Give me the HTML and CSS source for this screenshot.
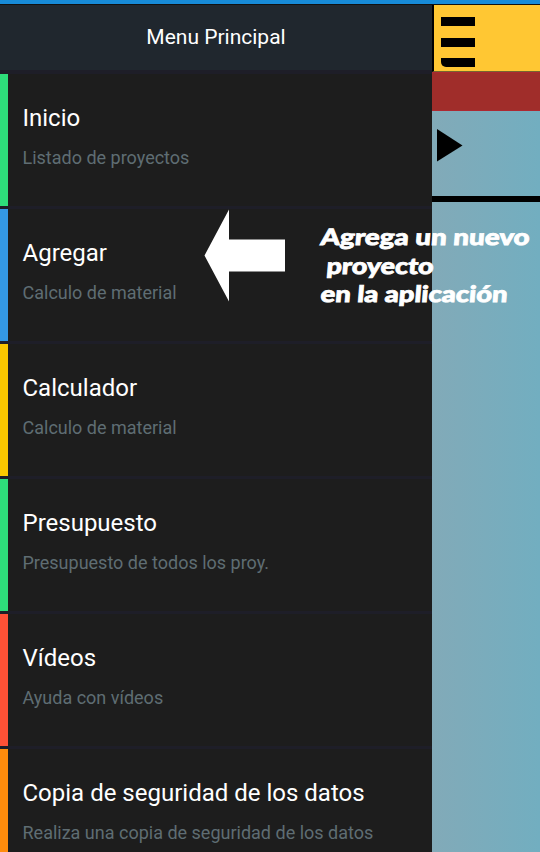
FILE: index.html
```html
<!DOCTYPE html>
<html lang="es">
<head>
<meta charset="utf-8">
<title>Menu Principal</title>
<link rel="stylesheet" href="styles.css">
</head>
<body>
<div class="status"></div>
<div class="screen">
  <nav class="drawer">
    <header class="drawer-head">Menu Principal</header>
    <ul class="menu">
      <li class="item green"><h2>Inicio</h2><p>Listado de proyectos</p></li>
      <li class="item blue"><h2>Agregar</h2><p>Calculo de material</p></li>
      <li class="item yellow"><h2>Calculador</h2><p>Calculo de material</p></li>
      <li class="item green"><h2>Presupuesto</h2><p>Presupuesto de todos los proy.</p></li>
      <li class="item red"><h2>Vídeos</h2><p>Ayuda con vídeos</p></li>
      <li class="item orange"><h2>Copia de seguridad de los datos</h2><p>Realiza una copia de seguridad de los datos</p></li>
    </ul>
  </nav>
  <main class="page">
    <div class="toolbar"><span></span><span></span><span></span></div>
    <div class="band"></div>
    <div class="row"><svg width="28" height="36" viewBox="0 0 28 36"><path d="M1 1V33.500L26.500 17.500Z"/></svg></div>
    <div class="body"></div>
  </main>
</div>
<div class="hint">
  <svg width="82" height="94" viewBox="0 0 82 94"><path d="M0.500 46.500L25 0.500V30.500H81V62.500H25V92.500Z" fill="#fff"/></svg>
  <svg class="hint-text" width="222" height="94" viewBox="0 0 222 94">
    <text transform="translate(1 36) skewX(-5)" textLength="209" lengthAdjust="spacingAndGlyphs">Agrega un nuevo</text>
    <text transform="translate(7 64.500) skewX(-5)" textLength="107" lengthAdjust="spacingAndGlyphs">proyecto</text>
    <text transform="translate(1 93) skewX(-5)" textLength="187" lengthAdjust="spacingAndGlyphs">en la aplicación</text>
  </svg>
</div>
</body>
</html>
```
FILE: styles.css
```css
* { box-sizing: border-box; margin: 0; padding: 0; }
body { width: 540px; height: 852px; overflow: hidden; background: #1d1d1d; font-family: Roboto, sans-serif; }
.status { height: 5px; background: #178bd8; border-bottom: 1px solid #111; }
.screen { display: flex; height: 847px; overflow: hidden; }
.drawer { width: 432px; background: #1d1d1d; }
.drawer-head { height: 67px; background: #20272e; color: #fff; text-align: center; font-size: 21px; line-height: 64px; }
.menu { list-style: none; }
.item { height: 135px; border-top: 3px solid #1e1e28; display: flex; flex-direction: column; padding-left: 22.5px; position: relative; }
.item:first-child { height: 136px; border-top-width: 4px; }
.item:first-child { margin-top: -2px; }
.item::before { content: ""; position: absolute; left: 0; top: 0; width: 8px; height: 132px; background: var(--bar); }
.green { --bar: #2edd7a; }
.blue { --bar: #3498e4; }
.yellow { --bar: #fac800; }
.red { --bar: #ff5136; }
.orange { --bar: #ff8c0c; }
.item h2 { font-weight: 400; font-size: 24px; line-height: 28px; color: #fff; margin-top: 30px; white-space: nowrap; }
.item p { font-size: 18px; line-height: 22px; color: #5f6d73; margin-top: 15px; white-space: nowrap; }
.page { width: 108px; display: flex; flex-direction: column; background: linear-gradient(90deg, #82aab8, #72aec0); }
.toolbar { height: 67px; background: #ffc733; border-left: 2px solid #000; border-bottom: 1px solid #77652f; padding: 12px 0 0 7px; display: flex; flex-direction: column; gap: 11.5px; }
.toolbar span { width: 34px; height: 9px; background: #000; }
.toolbar span:last-child { border-bottom-left-radius: 5px; }
.band { height: 39px; background: #a02d2a; border-top: 1px solid #ad2831; border-bottom: 1px solid #ad2831; }
.row { height: 91px; border-bottom: 6px solid #000; padding: 17px 0 0 4px; }
.row svg { display: block; }
.body { flex: 1; }
.hint { position: absolute; left: 204px; top: 209px; display: flex; }
.hint-text { margin-left: 33px; overflow: visible; font: 900 22.5px Lato, sans-serif; fill: #fff; stroke: #fff; stroke-width: 0.8px; }
```
